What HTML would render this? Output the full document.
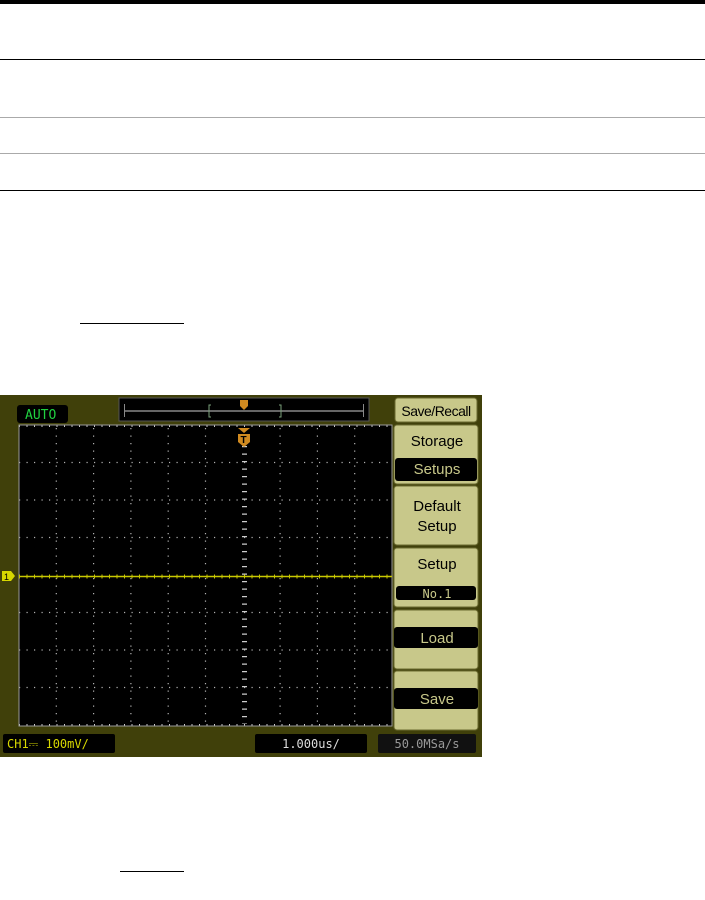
<!DOCTYPE html>
<html><head><style>
html,body{margin:0;padding:0;background:#fff;width:705px;height:900px;overflow:hidden;position:relative;font-family:"Liberation Sans",sans-serif}
.l{position:absolute;left:0;width:705px}
</style></head><body>
<div class="l" style="top:0;height:4px;background:#000"></div>
<div class="l" style="top:59px;height:1px;background:#000"></div>
<div class="l" style="top:117px;height:1px;background:#aaa"></div>
<div class="l" style="top:153px;height:1px;background:#aaa"></div>
<div class="l" style="top:190px;height:1px;background:#000"></div>
<div style="position:absolute;left:80px;top:323px;width:104px;height:1px;background:#000"></div>
<div style="position:absolute;left:120px;top:871px;width:64px;height:1px;background:#000"></div>

<svg style="position:absolute;left:0;top:395px" width="482" height="362" viewBox="0 395 482 362" font-family="Liberation Sans, sans-serif">
<rect x="0" y="395" width="482" height="362" fill="#40400a"/>
<rect x="19" y="425" width="373" height="301" fill="#000"/>
<g stroke="#b0b0b0" stroke-width="1.2" stroke-dasharray="1.2 6.3">
<line x1="56.3" y1="428" x2="56.3" y2="726"/><line x1="93.6" y1="428" x2="93.6" y2="726"/><line x1="130.9" y1="428" x2="130.9" y2="726"/><line x1="168.2" y1="428" x2="168.2" y2="726"/><line x1="205.5" y1="428" x2="205.5" y2="726"/>
<line x1="280.1" y1="428" x2="280.1" y2="726"/><line x1="317.4" y1="428" x2="317.4" y2="726"/><line x1="354.7" y1="428" x2="354.7" y2="726"/>
<line x1="19" y1="462.5" x2="392" y2="462.5"/><line x1="19" y1="500" x2="392" y2="500"/><line x1="19" y1="537.5" x2="392" y2="537.5"/><line x1="19" y1="612.5" x2="392" y2="612.5"/><line x1="19" y1="650" x2="392" y2="650"/><line x1="19" y1="687.5" x2="392" y2="687.5"/>
</g>
<g stroke="#ccc" stroke-width="2" stroke-dasharray="1 6.5">
<line x1="19" y1="426" x2="392" y2="426"/><line x1="19" y1="725" x2="392" y2="725"/>
</g>
<rect x="19" y="425" width="373" height="301" fill="none" stroke="#999" stroke-width="1"/>
<line x1="244.5" y1="446" x2="244.5" y2="724" stroke="#ccc" stroke-width="5" stroke-dasharray="1.2 6.3"/>
<line x1="19" y1="576.5" x2="392" y2="576.5" stroke="#c8c800" stroke-width="1.5"/>
<line x1="19" y1="576.5" x2="392" y2="576.5" stroke="#c8c800" stroke-width="4" stroke-dasharray="1 6.5"/>
<path d="M2 571 h9 l4 5 -4 5 h-9z" fill="#d8d800"/>
<text x="4" y="580" font-size="9" fill="#000">1</text>
<rect x="17" y="405" width="51" height="18" rx="3" fill="#000"/>
<text x="25" y="419" font-size="13" fill="#20d040" font-family="DejaVu Sans Mono, monospace">AUTO</text>
<rect x="119" y="398" width="250" height="23" fill="#000" stroke="#555"/>
<line x1="124" y1="411" x2="364" y2="411" stroke="#888" stroke-width="1.5"/>
<line x1="124.5" y1="404" x2="124.5" y2="417" stroke="#888"/><line x1="363.5" y1="404" x2="363.5" y2="417" stroke="#888"/>
<path d="M211 405 h-2 v12 h2 M279 405 h2 v12 h-2" stroke="#7aa07a" fill="none"/>
<path d="M240 400 h8 v6 l-4 4 -4 -4z" fill="#d08a20"/>
<path d="M238 428 h12 l-6 5z" fill="#d08a20"/>
<path d="M238 434 h12 v8 l-6 5 -6 -5z" fill="#d08a20"/>
<text x="240.5" y="443" font-size="10" fill="#000" font-weight="bold">T</text>
<g fill="#c8c88a" stroke="#6a6a30">
<rect x="395" y="398" width="82" height="24" rx="3"/>
<rect x="394" y="425" width="84" height="59" rx="3"/>
<rect x="394" y="486" width="84" height="59" rx="3"/>
<rect x="394" y="548" width="84" height="59" rx="3"/>
<rect x="394" y="610" width="84" height="59" rx="3"/>
<rect x="394" y="671" width="84" height="59" rx="3"/>
</g>
<rect x="395" y="458" width="82" height="23" rx="3" fill="#000"/>
<rect x="396" y="586" width="80" height="14" rx="3" fill="#000"/>
<rect x="394" y="627" width="84" height="21" rx="3" fill="#000"/>
<rect x="394" y="688" width="84" height="21" rx="3" fill="#000"/>
<g font-size="15" text-anchor="middle" fill="#000">
<text x="436" y="416" font-size="14" letter-spacing="-0.5">Save/Recall</text>
<text x="437" y="446">Storage</text>
<text x="437" y="474" fill="#c8c88a">Setups</text>
<text x="437" y="511">Default</text>
<text x="437" y="531">Setup</text>
<text x="437" y="569">Setup</text>
<text x="437" y="598" font-size="12" fill="#c8c88a" font-family="DejaVu Sans Mono, monospace">No.1</text>
<text x="437" y="643" fill="#c8c88a">Load</text>
<text x="437" y="704" fill="#c8c88a">Save</text>
</g>
<rect x="3" y="734" width="112" height="19" rx="2" fill="#000"/>
<text x="7" y="748" font-size="12" fill="#d8d800" font-family="DejaVu Sans Mono, monospace">CH1⎓  100mV/</text>
<rect x="255" y="734" width="112" height="19" rx="2" fill="#000"/>
<text x="311" y="748" font-size="12" fill="#ddd" text-anchor="middle" font-family="DejaVu Sans Mono, monospace">1.000us/</text>
<rect x="378" y="734" width="98" height="19" rx="2" fill="#111"/>
<text x="427" y="748" font-size="12" fill="#999" text-anchor="middle" font-family="DejaVu Sans Mono, monospace">50.0MSa/s</text>
</svg>
</body></html>
